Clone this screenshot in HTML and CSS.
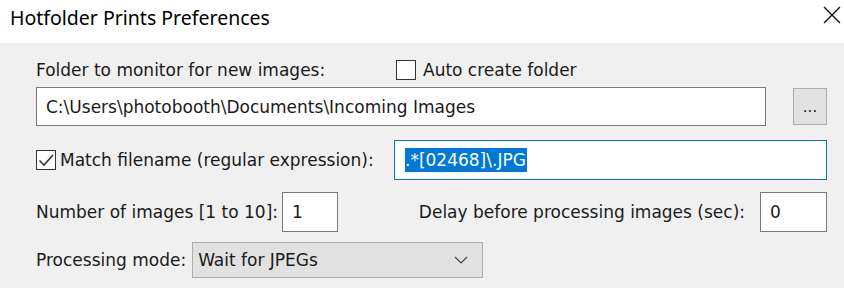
FILE: index.html
```html
<!DOCTYPE html>
<html lang="en">
<head>
    <meta charset="UTF-8">
    <title>Hotfolder Prints Preferences</title>
    <link rel="stylesheet" href="styles.css">
</head>
<body>
    <div class="titlebar">
        <span class="title">Hotfolder Prints Preferences</span>
        <svg class="close" width="18" height="18" viewBox="0 0 18 18">
            <path d="M1 1L17 17M17 1L1 17" stroke="#111" stroke-width="1.4" fill="none"/>
        </svg>
    </div>

    <div class="dialog">
        <!-- folder -->
        <div class="row row-head">
            <span class="folder-label">Folder to monitor for new images:</span>
            <label class="check">
                <span class="box"></span>
                Auto create folder
            </label>
        </div>
        <div class="row row-folder">
            <div class="field field-wide">C:\Users\photobooth\Documents\Incoming Images</div>
            <div class="browse">...</div>
        </div>

        <!-- filename match -->
        <div class="row row-match">
            <label class="check match-check">
                <span class="box checked">
                    <svg width="18" height="18" viewBox="0 0 18 18">
                        <path d="M2.5 9.5L7 14L16 4" stroke="#333" stroke-width="1.6" fill="none"/>
                    </svg>
                </span>
                Match filename (regular expression):
            </label>
            <div class="field field-focus"><span class="selected">.*[02468]\.JPG</span></div>
        </div>

        <!-- counts -->
        <div class="row row-count">
            <span>Number of images [1 to 10]:</span>
            <div class="field field-count">1</div>
            <span class="delay-label">Delay before processing images (sec):</span>
            <div class="field field-delay">0</div>
        </div>

        <!-- mode -->
        <div class="row row-mode">
            <span>Processing mode:</span>
            <div class="select">
                Wait for JPEGs
                <svg class="chevron" width="14" height="8" viewBox="0 0 14 8">
                    <path d="M1 1L7 7L13 1" stroke="#444" stroke-width="1.2" fill="none"/>
                </svg>
            </div>
        </div>
    </div>
</body>
</html>
```

FILE: styles.css
```css
body {
    margin: 0;
    font-family: 'DejaVu Sans', sans-serif;
    font-size: 17px;
    color: #1a1a1a;
    background: #f0f0f0;
    height: 288px;
    overflow: hidden;
}
.titlebar {
    height: 43px;
    background: #fff;
    display: flex;
    align-items: center;
    justify-content: space-between;
    padding: 0 3px 9px 10px;
    box-sizing: border-box;
}
.title {
    font-family: 'Noto Sans', sans-serif;
    font-size: 19.5px;
    color: #000;
}
.close {
    margin-top: -4px;
}
.dialog {
    padding: 15px 17px 0 36px;
}
.row {
    display: flex;
    align-items: center;
}
.row-head {
    height: 23px;
}
.folder-label {
    width: 360px;
}
.check {
    display: flex;
    align-items: center;
    gap: 7px;
}
.box {
    width: 18px;
    height: 18px;
    border: 1px solid #333;
    background: #fff;
    display: flex;
}
.row-folder {
    margin-top: 6px;
    height: 39px;
    gap: 27px;
}
.field {
    background: #fff;
    border: 1px solid #7a7a7a;
    box-sizing: border-box;
    height: 100%;
    display: flex;
    align-items: center;
    padding-left: 9px;
}
.field-wide {
    flex: 1;
}
.browse {
    width: 34px;
    height: 37px;
    box-sizing: border-box;
    background: #e1e1e1;
    border: 1px solid #adadad;
    display: flex;
    align-items: center;
    justify-content: center;
    font-size: 15px;
}
.row-match {
    margin-top: 14px;
    height: 40px;
}
.match-check {
    width: 358px;
    gap: 4px;
}
.field-focus {
    flex: 1;
    border: 1px solid #0078d7;
    padding-left: 10px;
}
.selected {
    background: #0078d7;
    color: #fff;
    line-height: 24px;
    padding-right: 1px;
}
.row-count {
    margin-top: 12px;
    height: 40px;
}
.field-count {
    width: 56px;
    margin-left: 4px;
}
.delay-label {
    margin-left: auto;
    margin-right: 15px;
}
.field-delay {
    width: 67px;
}
.row-mode {
    margin-top: 10px;
    height: 36px;
    gap: 6px;
}
.select {
    width: 291px;
    height: 36px;
    box-sizing: border-box;
    background: #e1e1e1;
    border: 1px solid #adadad;
    display: flex;
    align-items: center;
    padding: 0 14px 0 5px;
    justify-content: space-between;
}
```
